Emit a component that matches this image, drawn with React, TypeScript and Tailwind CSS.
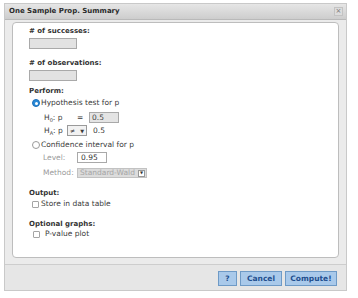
const font = { fontFamily: '"DejaVu Sans", Verdana, sans-serif' };

const Radio = ({ checked }: { checked?: boolean }) =>
  checked ? (
    <span className="w-[8px] h-[8px] rounded-full bg-[#2a8ad8] border border-[#1d6fb8] flex items-center justify-center">
      <span className="w-[3px] h-[3px] rounded-full bg-white" />
    </span>
  ) : (
    <span className="w-[8px] h-[8px] rounded-full bg-white border border-[#9a9a9a]" />
  );

const Box = () => <span className="w-[7px] h-[7px] rounded-[1px] bg-white border border-[#a5a5a5]" />;

const Label = ({ children, className = '' }: { children: string; className?: string }) => (
  <div className={`h-[10px] font-bold text-[7px] text-[#333] ${className}`}>{children}</div>
);

export default function App() {
  return (
    <div className="w-[358px] h-[298px] bg-white pl-[4px] pt-[3px]" style={font}>
      <div className="w-[343px] h-[288px] bg-[#ebebeb] border border-[#c9c9c9] flex flex-col">
        <div className="h-[16px] flex items-center justify-between pl-[4px] pr-[3px] bg-gradient-to-b from-[#e6e6e6] to-[#cdcdcd] border-b border-[#b9b9b9]">
          <span className="text-[7px] font-bold text-[#2b2b2b] leading-none">One Sample Prop. Summary</span>
          <span className="w-[9px] h-[9px] bg-[#dcdcdc] border border-[#c3c3c3] flex items-center justify-center text-[7px] leading-none text-[#777]">×</span>
        </div>

        <div className="mx-[7px] mt-[2px] h-[236px] bg-white border border-[#bdbdbd] rounded-[4px] pt-[3px] pl-[16px] flex flex-col text-[7.5px] leading-[10px] text-[#3a3a3a]">
          <Label># of successes:</Label>
          <div className="mt-[2px] w-[48px] h-[11px] bg-[#e2e2e2] border border-[#a9a9a9]" />
          <Label className="mt-[9px]"># of observations:</Label>
          <div className="mt-[2px] w-[48px] h-[11px] bg-[#e2e2e2] border border-[#a9a9a9]" />

          <Label className="mt-[5px]">Perform:</Label>
          <div className="mt-[2px] h-[10px] flex items-center gap-[1px] pl-[3px]">
            <Radio checked />
            <span>Hypothesis test for p</span>
          </div>
          <div className="mt-[4px] h-[11px] flex items-center pl-[15px]">
            <span className="w-[33px]">
              H<sub className="text-[5px] align-[-1px]">0</sub>: p
            </span>
            <span className="w-[12px]">=</span>
            <span className="w-[30px] h-[11px] bg-[#e4e4e4] border border-[#a9a9a9] pl-[2px] leading-[9px] text-[#444]">0.5</span>
          </div>
          <div className="mt-[2px] h-[11px] flex items-center pl-[15px]">
            <span className="w-[23px]">
              H<sub className="text-[5px] align-[-1px]">A</sub>: p
            </span>
            <span className="w-[20px] h-[11px] bg-[#f2f2f2] border border-[#9a9a9a] flex items-center justify-between px-[2px]">
              <span className="text-[6px]">≠</span>
              <span className="text-[5px]">▼</span>
            </span>
            <span className="ml-[6px]">0.5</span>
          </div>
          <div className="mt-[4px] h-[10px] flex items-center gap-[1px] pl-[3px]">
            <Radio />
            <span>Confidence interval for p</span>
          </div>
          <div className="mt-[2px] h-[11px] flex items-center pl-[14px]">
            <span className="w-[34px] text-[#9a9a9a]">Level:</span>
            <span className="w-[30px] h-[11px] bg-white border border-[#a9a9a9] pl-[3px] leading-[9px] text-[#333]">0.95</span>
          </div>
          <div className="mt-[5px] h-[10px] flex items-center pl-[14px]">
            <span className="w-[34px] text-[#9a9a9a]">Method:</span>
            <span className="w-[70px] h-[10px] bg-[#dcdcdc] border border-[#c2c2c2] flex items-center justify-between pl-[2px] pr-[1px] text-[#a5a5a5]">
              <span>Standard-Wald</span>
              <span className="w-[7px] h-[7px] bg-white border border-[#999] flex items-center justify-center text-[4px] text-[#333]">▼</span>
            </span>
          </div>

          <Label className="mt-[10px]">Output:</Label>
          <div className="mt-[1px] h-[10px] flex items-center gap-[2px] pl-[3px]">
            <Box />
            <span>Store in data table</span>
          </div>
          <Label className="mt-[10px]">Optional graphs:</Label>
          <div className="h-[10px] flex items-center gap-[5px] pl-[4px]">
            <Box />
            <span>P-value plot</span>
          </div>
        </div>

        <div className="mt-[6px] border-t border-[#cdcdcd] flex-1 bg-[#e6e6e6] flex justify-end items-start pt-[6px] pr-[9px] gap-[3px]">
          <button className="w-[19px] h-[15px] bg-[#a9c9ea] border border-[#6e9ac6] text-[7.5px] font-bold text-[#1f4f8f] leading-none">?</button>
          <button className="w-[42px] h-[15px] bg-[#a9c9ea] border border-[#6e9ac6] text-[7.5px] font-bold text-[#1f4f8f] leading-none">Cancel</button>
          <button className="w-[52px] h-[15px] bg-[#a9c9ea] border border-[#6e9ac6] text-[7.5px] font-bold text-[#1f4f8f] leading-none">Compute!</button>
        </div>
      </div>
    </div>
  );
}
